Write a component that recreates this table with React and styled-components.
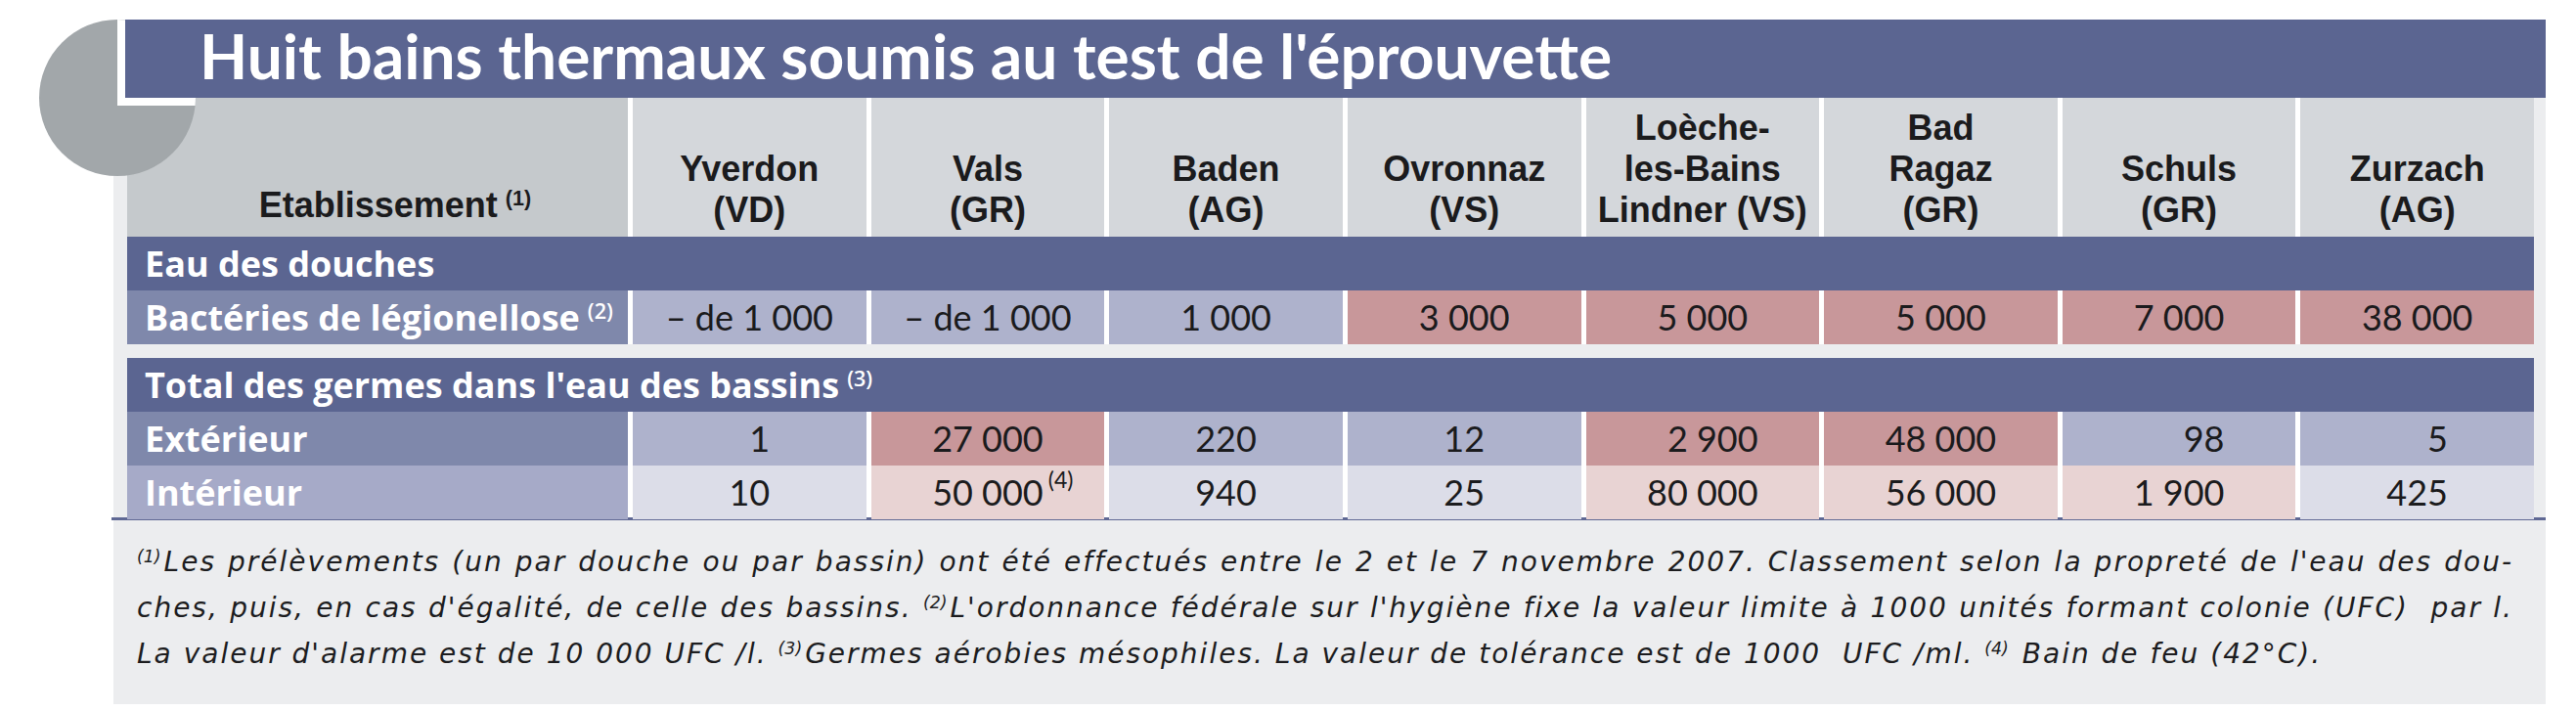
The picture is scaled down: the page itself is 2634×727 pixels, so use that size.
import React from 'react'
import styled, {createGlobalStyle} from 'styled-components'

const GlobalStyle = createGlobalStyle`
    html, body {
        margin: 0;
        padding: 0;
        background: #ffffff;
    }
    body {
        font-family: Lato, "Open Sans", sans-serif;
        color: #1b1b1d;
    }
`;

const tones = {
    blue: '#aeb2cc',
    pink: '#c8979a',
    pale: '#dcdde8',
    blush: '#e8d3d3',
}

const cities = [
    ['Yverdon', '(VD)'],
    ['Vals', '(GR)'],
    ['Baden', '(AG)'],
    ['Ovronnaz', '(VS)'],
    ['Loèche-', 'les-Bains', 'Lindner (VS)'],
    ['Bad', 'Ragaz', '(GR)'],
    ['Schuls', '(GR)'],
    ['Zurzach', '(AG)'],
]

const legionella = [
    ['– de 1\u00a0000', 'blue'],
    ['– de 1\u00a0000', 'blue'],
    ['1\u00a0000', 'blue'],
    ['3\u00a0000', 'pink'],
    ['5\u00a0000', 'pink'],
    ['5\u00a0000', 'pink'],
    ['7\u00a0000', 'pink'],
    ['38\u00a0000', 'pink'],
]

// outdoor / indoor pool values share a right edge in each column
const pools = [
    {ext: '1', extTone: 'blue', int: '10', intTone: 'pale'},
    {ext: '27\u00a0000', extTone: 'pink', int: '50\u00a0000', intTone: 'blush', note: '(4)'},
    {ext: '220', extTone: 'blue', int: '940', intTone: 'pale'},
    {ext: '12', extTone: 'blue', int: '25', intTone: 'pale'},
    {ext: '2\u00a0900', extTone: 'pink', int: '80\u00a0000', intTone: 'blush'},
    {ext: '48\u00a0000', extTone: 'pink', int: '56\u00a0000', intTone: 'blush'},
    {ext: '98', extTone: 'blue', int: '1\u00a0900', intTone: 'blush'},
    {ext: '5', extTone: 'blue', int: '425', intTone: 'pale'},
]

const widest = (a, b) => (a.length >= b.length ? a : b)

const App = () => {
    return (
        <Page>
            <GlobalStyle/>
            <Corner width="210" height="190" viewBox="0 0 210 190">
                <defs>
                    <clipPath id="disc">
                        <circle cx="120" cy="100" r="80"/>
                    </clipPath>
                </defs>
                <circle cx="120" cy="100" r="80" fill="#a2a7aa"/>
                <rect x="120" y="0" width="100" height="108" fill="#ffffff" clipPath="url(#disc)"/>
            </Corner>
            <TitleBar>Huit bains thermaux soumis au test de l'éprouvette</TitleBar>
            <Panel>
                <Table>
                    <HeadRow>
                        <HeadCell $label>
                            <span>Etablissement<Sup>(1)</Sup></span>
                        </HeadCell>
                        {cities.map(lines => (
                            <HeadCell key={lines.join('')}>
                                {lines.map(line => <span key={line}>{line}</span>)}
                            </HeadCell>
                        ))}
                    </HeadRow>

                    <SectionBar>Eau des douches</SectionBar>
                    <DataRow>
                        <RowLabel>Bactéries de légionellose<Sup>(2)</Sup></RowLabel>
                        {legionella.map(([value, tone], i) => (
                            <ValueCell key={i} $tone={tone}>{value}</ValueCell>
                        ))}
                    </DataRow>

                    <Spacer/>

                    <SectionBar>Total des germes dans l'eau des bassins<Sup>(3)</Sup></SectionBar>
                    <DataRow>
                        <RowLabel>Extérieur</RowLabel>
                        {pools.map((p, i) => (
                            <ValueCell key={i} $tone={p.extTone}>
                                <Fig>
                                    <Ghost>{widest(p.ext, p.int)}</Ghost>
                                    <span>{p.ext}</span>
                                </Fig>
                            </ValueCell>
                        ))}
                    </DataRow>
                    <DataRow $short>
                        <RowLabel $light>Intérieur</RowLabel>
                        {pools.map((p, i) => (
                            <ValueCell key={i} $tone={p.intTone}>
                                <Fig>
                                    <Ghost>{widest(p.ext, p.int)}</Ghost>
                                    <span>{p.int}</span>
                                    {p.note && <CellNote>{p.note}</CellNote>}
                                </Fig>
                            </ValueCell>
                        ))}
                    </DataRow>
                </Table>
                <Rule/>
                <Notes>
                    <NoteLine>
                        <NoteSup>(1)</NoteSup>Les prélèvements (un par douche ou par bassin) ont été effectués entre le 2 et le 7 novembre 2007. Classement selon la propreté de l'eau des dou-
                    </NoteLine>
                    <NoteLine>
                        ches, puis, en cas d'égalité, de celle des bassins. <NoteSup>(2)</NoteSup>L'ordonnance fédérale sur l'hygiène fixe la valeur limite à 1000 unités formant colonie (UFC)&nbsp; par l.
                    </NoteLine>
                    <NoteLine $last>
                        La valeur d'alarme est de 10 000 UFC /l. <NoteSup>(3)</NoteSup>Germes aérobies mésophiles. La valeur de tolérance est de 1000&nbsp; UFC /ml. <NoteSup>(4)</NoteSup> Bain de feu (42°C).
                    </NoteLine>
                </Notes>
            </Panel>
        </Page>
    )
}

export default App

const Page = styled.div`
    position: relative;
    width: 2634px;
    height: 727px;
    box-sizing: border-box;
    padding: 20px 0 0 116px;
`;

const Corner = styled.svg`
    position: absolute;
    left: 0;
    top: 0;
    z-index: 1;
`;

const TitleBar = styled.h1`
    position: relative;
    z-index: 2;
    margin: 0 0 0 12px;
    width: 2475px;
    height: 80px;
    box-sizing: border-box;
    padding-left: 76px;
    background: #5b6591;
    color: #ffffff;
    font-family: Lato, sans-serif;
    font-weight: 700;
    font-size: 64px;
    line-height: 74px;
    white-space: nowrap;
`;

const Panel = styled.div`
    width: 2487px;
    background: #ecedef;
`;

const Table = styled.div`
    display: flex;
    flex-direction: column;
    padding: 0 12px 0 14px;
`;

const Grid = styled.div`
    display: grid;
    grid-template-columns: 512px repeat(8, 1fr);
    column-gap: 5px;
    background: #ffffff;
`;

const HeadRow = styled(Grid)`
    height: 142px;
`;

const HeadCell = styled.div`
    display: flex;
    flex-direction: column;
    justify-content: flex-end;
    align-items: center;
    padding-bottom: 6px;
    padding-left: ${p => (p.$label ? '36px' : '0')};
    background: ${p => (p.$label ? '#c5c9cc' : '#d4d7db')};
    font-family: "Liberation Sans", Arial, sans-serif;
    font-weight: 700;
    font-size: 36px;
    line-height: 42px;
    text-align: center;
    white-space: nowrap;
    & > span {
        display: block;
    }
`;

const SectionBar = styled.div`
    height: 55px;
    padding-left: 18px;
    background: #5b6591;
    color: #ffffff;
    font-family: "Open Sans", sans-serif;
    font-weight: 700;
    font-size: 36px;
    line-height: 55px;
    white-space: nowrap;
`;

const DataRow = styled(Grid)`
    height: ${p => (p.$short ? '53px' : '55px')};
`;

const RowLabel = styled.div`
    padding-left: 18px;
    background: ${p => (p.$light ? '#a6aac8' : '#7f88ab')};
    color: #ffffff;
    font-family: "Open Sans", sans-serif;
    font-weight: 700;
    font-size: 36px;
    line-height: 55px;
    white-space: nowrap;
`;

const ValueCell = styled.div`
    background: ${p => tones[p.$tone]};
    text-align: center;
    font-family: Lato, sans-serif;
    font-weight: 400;
    font-size: 36px;
    line-height: 55px;
    white-space: nowrap;
`;

const Fig = styled.span`
    position: relative;
    display: inline-grid;
    & > span {
        grid-area: 1 / 1;
        justify-self: end;
    }
`;

const Ghost = styled.span`
    visibility: hidden;
`;

const CellNote = styled.span`
    position: absolute;
    left: 100%;
    top: 3px;
    padding-left: 5px;
    font-size: 23px;
    line-height: 1;
`;

const Sup = styled.span`
    position: relative;
    top: -0.55em;
    margin-left: 8px;
    font-size: 0.6em;
    font-weight: 600;
`;

const Spacer = styled.div`
    height: 14px;
    background: #ecedef;
`;

const Rule = styled.div`
    height: 3px;
    margin-left: -2px;
    background: #5f6894;
`;

const Notes = styled.div`
    padding: 21px 33px 26px 24px;
    font-family: "DejaVu Sans", "Open Sans", sans-serif;
    font-style: italic;
    font-size: 28px;
    letter-spacing: 2px;
    line-height: 44px;
    color: #1d1d1f;
`;

const NoteLine = styled.div`
    text-align: justify;
    text-align-last: ${p => (p.$last ? 'left' : 'justify')};
    word-spacing: ${p => (p.$last ? 'normal' : '-6px')};
    white-space: nowrap;
`;

const NoteSup = styled.span`
    position: relative;
    top: -0.5em;
    margin-right: 3px;
    font-size: 0.62em;
    letter-spacing: 0;
`;
